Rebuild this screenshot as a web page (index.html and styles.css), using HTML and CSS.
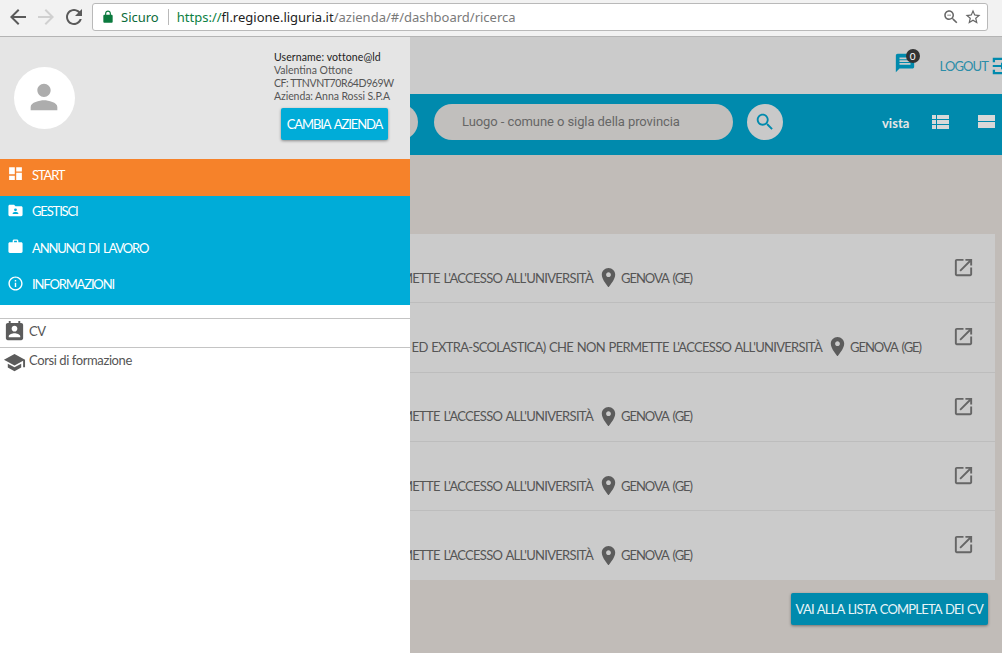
FILE: index.html
```html
<!DOCTYPE html>
<html lang="en">
<head>
    <meta charset="UTF-8">
    <meta name="viewport" content="width=device-width, initial-scale=1.0">
    <title>Dashboard ricerca</title>
    <link rel="stylesheet" href="styles.css">
</head>
<body>
    <svg class="sprite" width="0" height="0">
        <symbol id="i-place" viewBox="0 0 24 24"><path d="M12 2C8.13 2 5 5.13 5 9c0 5.25 7 13 7 13s7-7.75 7-13c0-3.87-3.13-7-7-7zm0 9.5c-1.38 0-2.5-1.12-2.5-2.5s1.12-2.5 2.5-2.5 2.5 1.12 2.5 2.5-1.12 2.5-2.5 2.5z"/></symbol>
        <symbol id="i-open" viewBox="0 0 24 24"><path d="M19 19H5V5h7V3H5c-1.11 0-2 .9-2 2v14c0 1.1.89 2 2 2h14c1.1 0 2-.9 2-2v-7h-2v7zM14 3v2h3.59l-9.83 9.83 1.41 1.41L19 6.41V10h2V3h-7z"/></symbol>
    </svg>

    <!-- browser chrome -->
    <div class="browser-bar">
        <svg class="nav-icon" viewBox="0 0 24 24"><path d="M20 11H7.83l5.59-5.59L12 4l-8 8 8 8 1.41-1.41L7.83 13H20v-2z"/></svg>
        <svg class="nav-icon nav-icon-off" viewBox="0 0 24 24"><path d="M12 4l-1.41 1.41L16.17 11H4v2h12.17l-5.58 5.59L12 20l8-8z"/></svg>
        <svg class="nav-icon" viewBox="0 0 24 24"><path d="M17.65 6.35C16.2 4.9 14.21 4 12 4c-4.42 0-7.99 3.58-7.99 8s3.57 8 7.99 8c3.73 0 6.84-2.55 7.73-6h-2.08c-.82 2.33-3.04 4-5.65 4-3.31 0-6-2.69-6-6s2.69-6 6-6c1.66 0 3.14.69 4.22 1.78L13 11h7V4l-2.35 2.35z"/></svg>
        <div class="address">
            <svg class="lock" viewBox="0 0 24 24"><path d="M18 8h-1V6c0-2.76-2.24-5-5-5S7 3.24 7 6v2H6c-1.1 0-2 .9-2 2v10c0 1.1.9 2 2 2h12c1.1 0 2-.9 2-2V10c0-1.1-.9-2-2-2zM9 8V6c0-1.66 1.34-3 3-3s3 1.34 3 3v2H9z"/></svg>
            <span class="secure">Sicuro</span>
            <span class="url"><span class="url-scheme">https://</span><span class="url-host">fl.regione.liguria.it</span>/azienda/#/dashboard/ricerca</span>
            <svg class="addr-icon addr-zoom" viewBox="0 0 24 24"><path d="M15.5 14h-.79l-.28-.27C15.41 12.59 16 11.11 16 9.5 16 5.91 13.09 3 9.5 3S3 5.91 3 9.5 5.91 16 9.5 16c1.61 0 3.09-.59 4.23-1.57l.27.28v.79l5 4.99L20.49 19l-4.99-5zm-6 0C7.01 14 5 11.99 5 9.5S7.01 5 9.5 5 14 7.01 14 9.5 11.99 14 9.5 14zM7 9h5v1H7z"/></svg>
            <svg class="addr-icon" viewBox="0 0 24 24"><path d="M22 9.24l-7.19-.62L12 2 9.19 8.63 2 9.24l5.46 4.73L5.82 21 12 17.27 18.18 21l-1.63-7.03L22 9.24zM12 15.4l-3.76 2.27 1-4.28-3.32-2.88 4.38-.38L12 6.1l1.71 4.04 4.38.38-3.32 2.88 1 4.28L12 15.4z"/></svg>
        </div>
    </div>

    <div class="app">
        <!-- page behind the drawer -->
        <header class="top-bar">
            <div class="msg-btn">
                <svg viewBox="0 0 24 24"><path d="M20 2H4c-1.1 0-1.99.9-1.99 2L2 22l4-4h14c1.1 0 2-.9 2-2V4c0-1.1-.9-2-2-2zm-2 12H6v-2h12v2zm0-3H6V9h12v2zm0-3H6V6h12v2z"/></svg>
                <span class="msg-badge">0</span>
            </div>
            <span class="logout">LOGOUT</span>
            <svg class="logout-icon" viewBox="0 0 24 24"><path d="M3 3h18v18H3v-5h2.5v2.5h13v-13h-13V8H3zM3 11h9V8l5 4-5 4v-3H3z"/></svg>
        </header>

        <div class="search-bar">
            <div class="pill pill-what"></div>
            <div class="pill pill-where">Luogo - comune o sigla della provincia</div>
            <button class="search-btn">
                <svg viewBox="0 0 24 24"><path d="M15.5 14h-.79l-.28-.27C15.41 12.59 16 11.11 16 9.5 16 5.91 13.09 3 9.5 3S3 5.91 3 9.5 5.91 16 9.5 16c1.61 0 3.09-.59 4.23-1.57l.27.28v.79l5 4.99L20.49 19l-4.99-5zm-6 0C7.01 14 5 11.99 5 9.5S7.01 5 9.5 5 14 7.01 14 9.5 11.99 14 9.5 14z"/></svg>
            </button>
            <span class="view-label">vista</span>
            <svg class="view-icon view-list" viewBox="0 0 24 24"><path d="M4 14h4v-4H4v4zm0 5h4v-4H4v4zM4 9h4V5H4v4zm5 5h12v-4H9v4zm0 5h12v-4H9v4zM9 5v4h12V5H9z"/></svg>
            <svg class="view-icon" viewBox="0 0 24 24"><path d="M4 18h17v-6H4v6zM4 5v6h17V5H4z"/></svg>
        </div>

        <main class="content">
            <div class="results">
                <div class="result">
                    <div class="result-info">
                        <span class="result-title">CHE NON PERMETTE L'ACCESSO ALL'UNIVERSITÀ</span>
                        <svg class="pin"><use href="#i-place"/></svg>
                        <span class="city">GENOVA (GE)</span>
                    </div>
                    <svg class="open"><use href="#i-open"/></svg>
                </div>
                <div class="result result-long">
                    <div class="result-info">
                        <span class="result-title">ISTRUZIONE SCOLASTICA ED EXTRA-SCOLASTICA) CHE NON PERMETTE L'ACCESSO ALL'UNIVERSITÀ</span>
                        <svg class="pin"><use href="#i-place"/></svg>
                        <span class="city">GENOVA (GE)</span>
                    </div>
                    <svg class="open"><use href="#i-open"/></svg>
                </div>
                <div class="result">
                    <div class="result-info">
                        <span class="result-title">CHE NON PERMETTE L'ACCESSO ALL'UNIVERSITÀ</span>
                        <svg class="pin"><use href="#i-place"/></svg>
                        <span class="city">GENOVA (GE)</span>
                    </div>
                    <svg class="open"><use href="#i-open"/></svg>
                </div>
                <div class="result">
                    <div class="result-info">
                        <span class="result-title">CHE NON PERMETTE L'ACCESSO ALL'UNIVERSITÀ</span>
                        <svg class="pin"><use href="#i-place"/></svg>
                        <span class="city">GENOVA (GE)</span>
                    </div>
                    <svg class="open"><use href="#i-open"/></svg>
                </div>
                <div class="result">
                    <div class="result-info">
                        <span class="result-title">CHE NON PERMETTE L'ACCESSO ALL'UNIVERSITÀ</span>
                        <svg class="pin"><use href="#i-place"/></svg>
                        <span class="city">GENOVA (GE)</span>
                    </div>
                    <svg class="open"><use href="#i-open"/></svg>
                </div>
            </div>
            <div class="list-link">
                <button class="btn btn-dark">VAI ALLA LISTA COMPLETA DEI CV</button>
            </div>
        </main>

        <!-- side drawer -->
        <aside class="drawer">
            <div class="drawer-head">
                <div class="avatar">
                    <svg viewBox="0 0 24 24"><path d="M12 12c2.21 0 4-1.79 4-4s-1.79-4-4-4-4 1.79-4 4 1.79 4 4 4zm0 2c-2.67 0-8 1.34-8 4v2h16v-2c0-2.66-5.33-4-8-4z"/></svg>
                </div>
                <div class="user">
                    <p class="user-name">Username: vottone@ld</p>
                    <p>Valentina Ottone</p>
                    <p class="user-cf">CF: TTNVNT70R64D969W</p>
                    <p class="user-company">Azienda: Anna Rossi S.P.A</p>
                    <button class="btn btn-light">CAMBIA AZIENDA</button>
                </div>
            </div>
            <nav class="menu">
                <a class="menu-item menu-active" href="#">
                    <svg viewBox="0 0 24 24"><path d="M3 13h8V3H3v10zm0 8h8v-6H3v6zm10 0h8V11h-8v10zm0-18v6h8V3h-8z"/></svg>
                    START
                </a>
                <a class="menu-item" href="#">
                    <svg viewBox="0 0 24 24"><path fill-rule="evenodd" d="M20 6h-8l-2-2H4c-1.1 0-2 .9-2 2v12c0 1.1.9 2 2 2h16c1.1 0 2-.9 2-2V8c0-1.1-.9-2-2-2zM14 11a2 2 0 1 1-4 0 2 2 0 0 1 4 0zM8 17v-1c0-1.33 2.67-2 4-2s4 .67 4 2v1z"/></svg>
                    GESTISCI
                </a>
                <a class="menu-item" href="#">
                    <svg viewBox="0 0 24 24"><path d="M20 6h-4V4c0-1.11-.89-2-2-2h-4c-1.11 0-2 .89-2 2v2H4c-1.11 0-1.99.89-1.99 2L2 19c0 1.11.89 2 2 2h16c1.11 0 2-.89 2-2V8c0-1.11-.89-2-2-2zm-6 0h-4V4h4v2z"/></svg>
                    ANNUNCI DI LAVORO
                </a>
                <a class="menu-item" href="#">
                    <svg viewBox="0 0 24 24"><path d="M11 17h2v-6h-2v6zm1-15C6.48 2 2 6.48 2 12s4.48 10 10 10 10-4.48 10-10S17.52 2 12 2zm0 18c-4.41 0-8-3.59-8-8s3.59-8 8-8 8 3.59 8 8-3.59 8-8 8zM11 9h2V7h-2v2z"/></svg>
                    INFORMAZIONI
                </a>
            </nav>
            <ul class="sub-menu">
                <li>
                    <svg viewBox="0 0 24 24"><path d="M19 3h-1V1h-2v2H8V1H6v2H5c-1.11 0-2 .9-2 2v14c0 1.1.89 2 2 2h14c1.1 0 2-.9 2-2V5c0-1.1-.9-2-2-2zm-7 3c1.66 0 3 1.34 3 3s-1.34 3-3 3-3-1.34-3-3 1.34-3 3-3zm6 12H6v-1c0-2 4-3.1 6-3.1s6 1.1 6 3.1v1z"/></svg>
                    CV
                </li>
                <li>
                    <svg viewBox="0 0 24 24"><path d="M5 13.18v4L12 21l7-3.82v-4L12 17l-7-3.82zM12 3L1 9l11 6 9-4.91V17h2V9L12 3z"/></svg>
                    Corsi di formazione
                </li>
            </ul>
        </aside>
    </div>
</body>
</html>
```

FILE: styles.css
```css
/* page */
* {
    box-sizing: border-box;
}

html, body {
    height: 100%;
}

body {
    margin: 0;
    overflow: hidden;
    font-family: Lato, "Open Sans", sans-serif;
    background-color: #c1bcb8;
    color: #555;
}

p {
    margin: 0;
}

button {
    font-family: inherit;
    border: none;
}

.sprite {
    position: absolute;
}

/* browser chrome */
.browser-bar {
    height: 37px;
    background-color: #f2f2f2;
    border-bottom: 1px solid #b4b4b4;
    display: flex;
    align-items: center;
    padding: 0 14px 2px 6px;
}

.nav-icon {
    width: 24px;
    height: 24px;
    margin-right: 4px;
    fill: #5a5a5a;
}

.nav-icon-off {
    fill: #d0d0d0;
}

.address {
    flex: 1;
    height: 28px;
    margin-left: 2px;
    background-color: #fff;
    border: 1px solid #b9b9b9;
    border-radius: 3px;
    display: flex;
    align-items: center;
    padding: 0 5px 0 8px;
    font-family: "Noto Sans", sans-serif;
    font-size: 13px;
    color: #7a7a7a;
}

.lock {
    width: 14px;
    height: 14px;
    fill: #0b7a3e;
}

.secure {
    color: #0b6b3a;
    margin-left: 6px;
    padding-right: 9px;
    border-right: 1px solid #b9b9b9;
    line-height: 16px;
}

.url {
    margin-left: 8px;
    flex: 1;
}

.url-scheme {
    color: #0b8043;
}

.url-host {
    color: #222;
}

.addr-icon {
    width: 18px;
    height: 18px;
    margin-left: 4px;
    fill: #666;
}

/* top bar */
.app {
    position: relative;
    height: 616px;
}

.top-bar {
    height: 57px;
    background-color: #cbcbcb;
    display: flex;
    align-items: center;
    justify-content: flex-end;
    margin-right: -10px;
}

.msg-btn {
    position: relative;
    width: 22px;
    height: 22px;
    margin: -5px 24px 0 0;
}

.msg-btn svg {
    width: 22px;
    height: 22px;
    fill: #008aad;
    display: block;
}

.msg-badge {
    position: absolute;
    top: -3px;
    right: -4px;
    width: 14px;
    height: 14px;
    border-radius: 50%;
    background-color: #333;
    color: #fff;
    font-size: 10px;
    line-height: 14px;
    text-align: center;
}

.logout {
    font-size: 13px;
    letter-spacing: -0.9px;
    color: #2b8da8;
}

.logout-icon {
    width: 22px;
    height: 22px;
    margin-left: 2px;
    fill: #008aad;
}

/* search bar */
.search-bar {
    height: 61px;
    background-color: #008aad;
    display: flex;
    align-items: center;
    padding: 0 0 5px 14px;
    overflow: hidden;
}

.pill {
    flex: none;
    height: 36px;
    border-radius: 18px;
    background-color: #c1bfbd;
    color: #666;
    font-family: Roboto, sans-serif;
    font-size: 13px;
    letter-spacing: -0.08px;
    line-height: 36px;
    padding-left: 28px;
}

.pill-what {
    width: 404px;
    margin-right: 16px;
}

.pill-where {
    width: 299px;
}

.search-btn {
    flex: none;
    width: 36px;
    height: 36px;
    border-radius: 50%;
    background-color: #c9c9c9;
    margin-left: 14px;
    padding: 7px;
}

.search-btn svg {
    width: 22px;
    height: 22px;
    fill: #008aad;
    display: block;
}

.view-label {
    flex: none;
    margin: 2px 0 0 99px;
    color: #e6e6e6;
    font-size: 13px;
    font-weight: 700;
}

.view-icon {
    width: 24px;
    height: 24px;
    fill: #d8d8d8;
    flex: none;
    margin-left: 22px;
}

.view-list {
    margin-left: 19px;
}

/* results */
.content {
    padding: 79px 7px 0 0;
}

.results {
    background-color: #cbcbcb;
}

.result {
    height: 69.3px;
    border-bottom: 1px solid #bdbdbd;
    display: flex;
    justify-content: space-between;
    padding-right: 20px;
    overflow: hidden;
}

.result:last-child {
    border-bottom: none;
}

.result-info {
    width: 692px;
    flex: none;
    display: flex;
    justify-content: flex-end;
    align-items: center;
    padding-top: 19px;
    font-size: 13px;
    letter-spacing: -0.7px;
    word-spacing: 1px;
    color: #555;
    white-space: nowrap;
}

.city {
    letter-spacing: -1.05px;
    word-spacing: 2px;
}

.result-long .result-info {
    width: 921px;
}

.pin {
    width: 23px;
    height: 23px;
    flex: none;
    margin: 0 1px 0 4px;
    fill: #5c5c5c;
}

.open {
    width: 23px;
    height: 23px;
    flex: none;
    margin-top: 22px;
    fill: #666;
}

.list-link {
    display: flex;
    justify-content: flex-end;
    padding: 13px 7px 0 0;
}

.btn {
    height: 32px;
    padding: 0 5px;
    border-radius: 2px;
    color: #e8f4f7;
    font-size: 13px;
    letter-spacing: -0.8px;
    word-spacing: 1px;
    box-shadow: 0 1px 3px rgba(0, 0, 0, 0.4);
}

.btn-dark {
    background-color: #008aad;
}

.btn-light {
    background-color: #00acd8;
    color: #fff;
    display: block;
    width: 107px;
    margin: 5px 0 0 7px;
    letter-spacing: -1.1px;
    word-spacing: 2px;
}

/* drawer */
.drawer {
    position: absolute;
    top: 0;
    left: 0;
    bottom: 0;
    width: 410px;
    background-color: #fff;
}

.drawer-head {
    height: 122px;
    background-color: #e5e5e5;
    display: flex;
    justify-content: space-between;
    padding: 14px 0 0 14px;
}

.avatar {
    width: 61px;
    height: 62px;
    margin-top: 16px;
    border-radius: 50%;
    background-color: #fff;
    padding: 10px;
}

.avatar svg {
    width: 40px;
    height: 40px;
    fill: #adadad;
    display: block;
}

.user {
    width: 136px;
    font-size: 10.5px;
    line-height: 13px;
    color: #555;
}

.user-name {
    color: #222;
    letter-spacing: 0.1px;
}

.user-cf {
    letter-spacing: -0.4px;
}

.user-company {
    letter-spacing: -0.08px;
}

.menu {
    background-color: #00acd8;
}

.menu-item {
    height: 36.5px;
    display: flex;
    align-items: center;
    padding: 0 0 5px 7px;
    color: #fff;
    font-size: 13px;
    letter-spacing: -1.15px;
    word-spacing: 1.5px;
    text-decoration: none;
}

.menu-active {
    background-color: #f6822a;
}

.menu-item svg {
    width: 17px;
    height: 17px;
    margin-right: 8px;
    margin-top: -2px;
    fill: #fff;
}

.sub-menu {
    list-style-type: none;
    margin: 13px 0 0 0;
    padding: 0;
    font-size: 13px;
    letter-spacing: -0.4px;
    color: #555;
}

.sub-menu li {
    height: 29px;
    border-top: 1px solid #c4c4c4;
    display: flex;
    align-items: center;
    padding: 0 0 4px 3px;
}

.sub-menu svg {
    width: 23px;
    height: 23px;
    margin-right: 3px;
    fill: #5c5c5c;
}

.sub-menu li:last-child svg {
    margin-top: 4px;
}
```
